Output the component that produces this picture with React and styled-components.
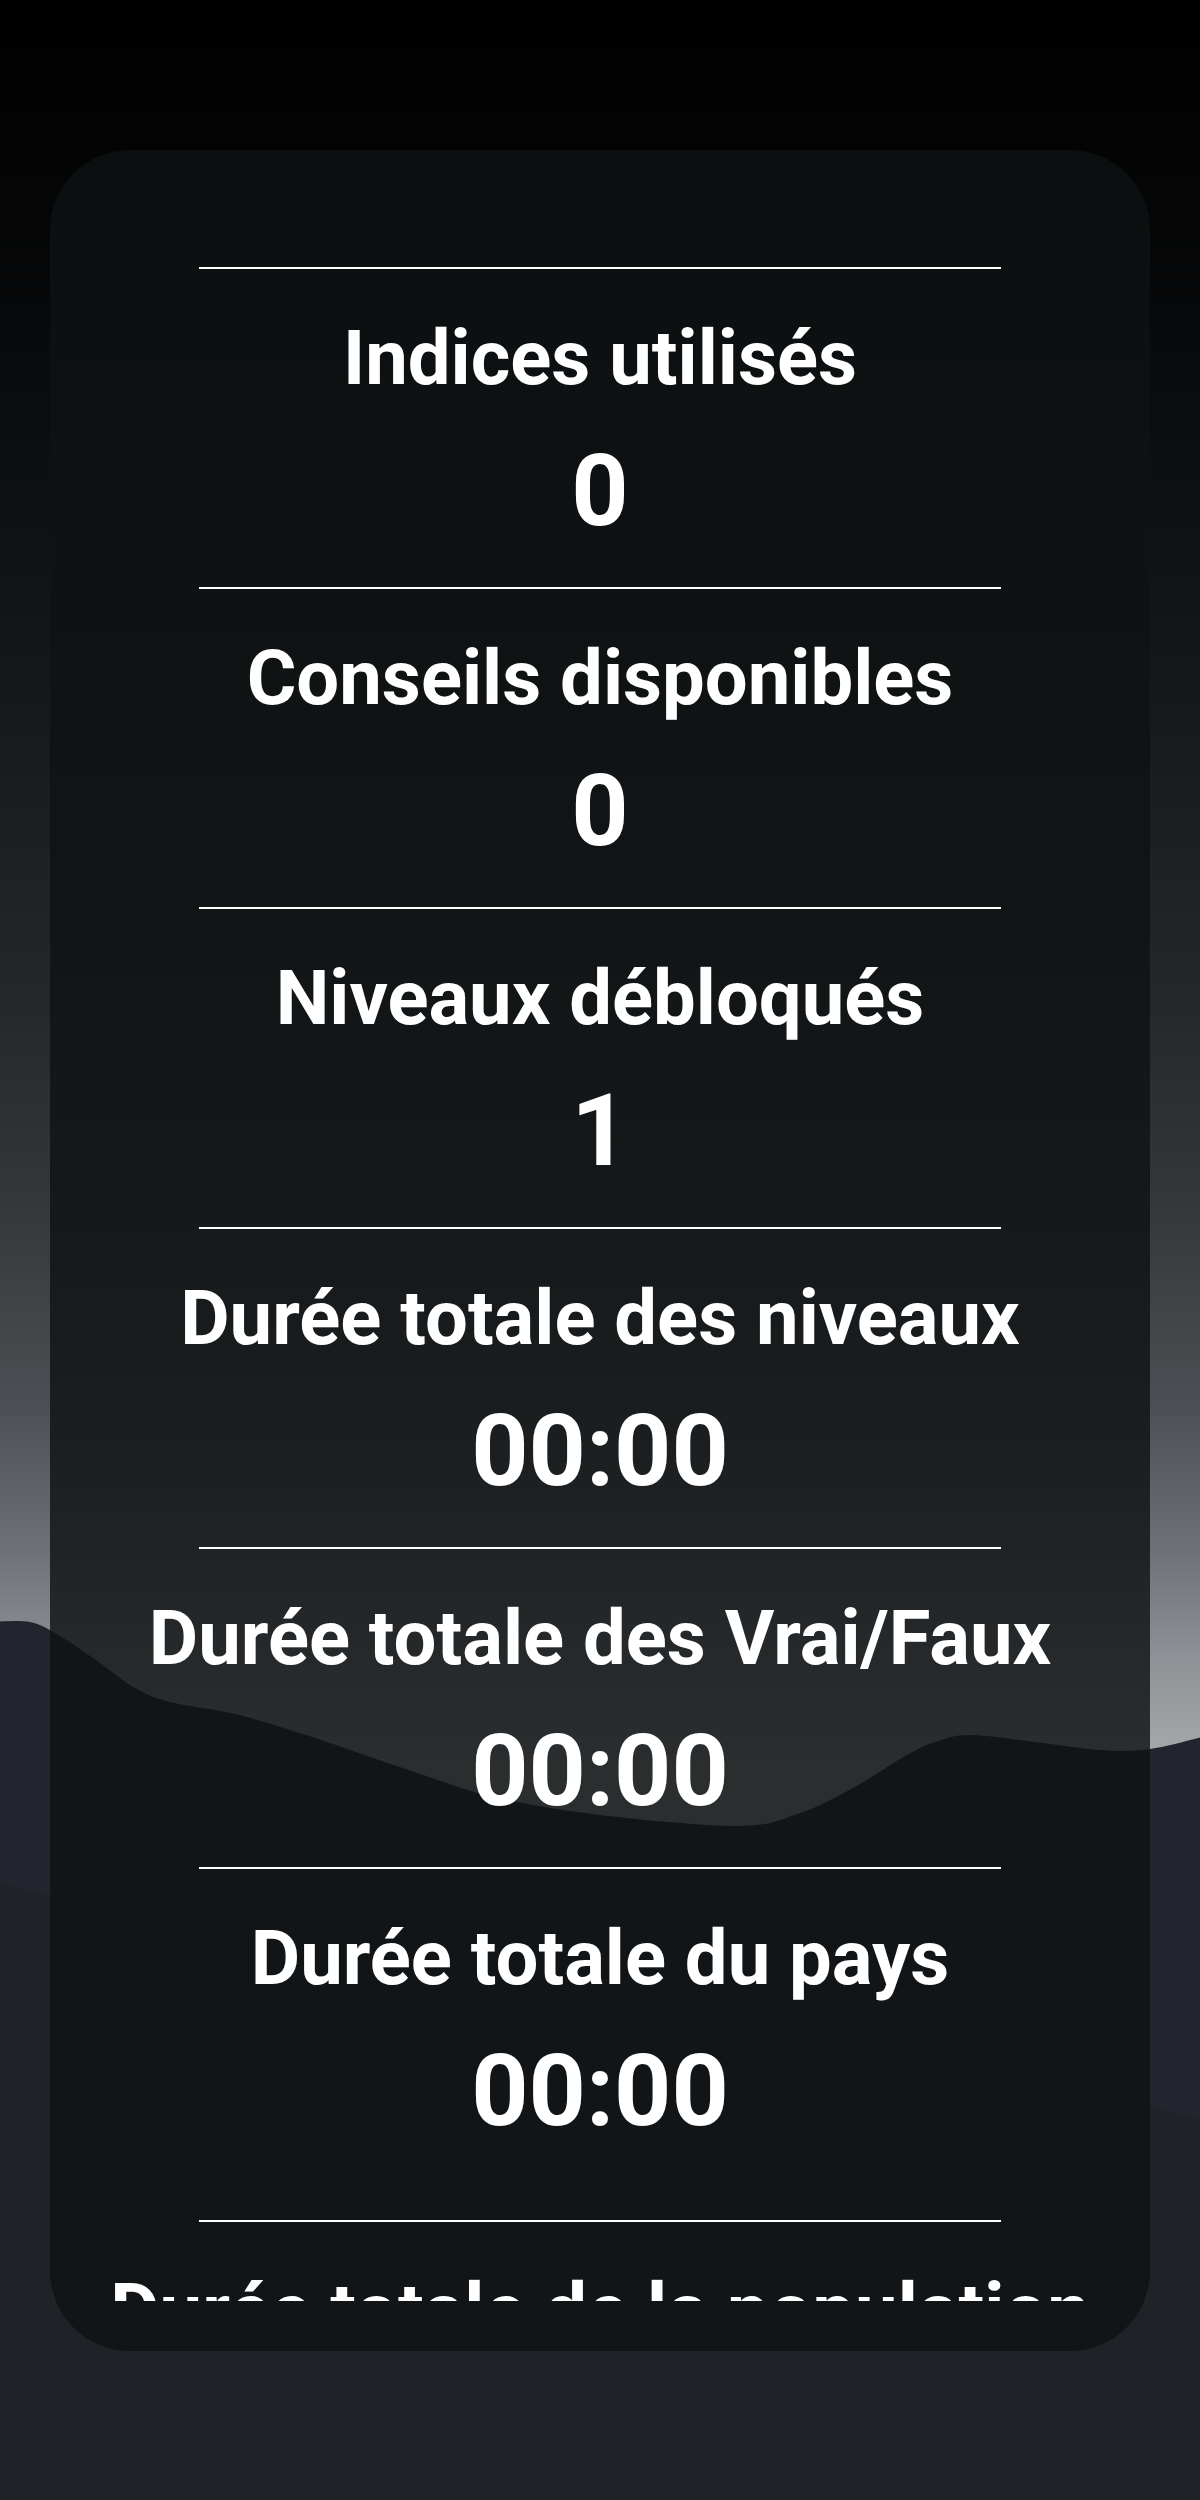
import React from "react";
import styled, { createGlobalStyle } from "styled-components";

const GlobalStyle = createGlobalStyle`
  html, body {
    margin: 0;
    padding: 0;
    background: #1f2227;
  }
  body {
    font-family: Roboto, "Noto Sans", "Liberation Sans", sans-serif;
    color: #ffffff;
  }
  * { box-sizing: border-box; }
`;

const Page = styled.div`
  position: relative;
  width: 1200px;
  min-height: 2500px;
  padding: 150px 50px 0;
  overflow: hidden;
`;

const Backdrop = styled.svg`
  position: absolute;
  top: 0;
  left: 0;
  width: 1200px;
  height: 2500px;
  z-index: 0;
  display: block;
`;

const Card = styled.section`
  position: relative;
  z-index: 1;
  height: 2201px;
  border-radius: 80px;
  background: rgba(15, 18, 19, 0.82);
  padding: 50px 0;
  display: flex;
  flex-direction: column;
`;

const Scroller = styled.div`
  flex: 1;
  overflow: hidden;
  display: flex;
  flex-direction: column;
  align-items: center;
  padding-top: 67px;
`;

const Stat = styled.div`
  display: flex;
  flex-direction: column;
  align-items: center;
  width: 100%;
  padding-bottom: ${(p) => (p.$extra ? 69 : 36)}px;
`;

const Divider = styled.div`
  width: 802px;
  height: 2px;
  background: #ffffff;
  flex-shrink: 0;
`;

const Title = styled.h2`
  margin: 44px 0 0;
  font-size: 76px;
  line-height: 90px;
  font-weight: 700;
  white-space: nowrap;
  text-align: center;
  color: #ffffff;
`;

const Value = styled.div`
  margin-top: 28px;
  font-size: 100px;
  line-height: 120px;
  font-weight: 700;
  text-align: center;
  color: #ffffff;
`;

function smoothPath(points) {
  let d = `M${points[0][0]},${points[0][1]}`;
  for (let i = 0; i < points.length - 1; i++) {
    const p0 = points[i - 1] || points[i];
    const p1 = points[i];
    const p2 = points[i + 1];
    const p3 = points[i + 2] || p2;
    const c1x = p1[0] + (p2[0] - p0[0]) / 6;
    const c1y = p1[1] + (p2[1] - p0[1]) / 6;
    const c2x = p2[0] - (p3[0] - p1[0]) / 6;
    const c2y = p2[1] - (p3[1] - p1[1]) / 6;
    d += ` C${c1x.toFixed(1)},${c1y.toFixed(1)} ${c2x.toFixed(1)},${c2y.toFixed(1)} ${p2[0]},${p2[1]}`;
  }
  return d;
}

const ridge = [
  [-10, 1622], [30, 1622], [60, 1636], [100, 1663], [135, 1688], [170, 1702],
  [235, 1714], [300, 1733], [400, 1767], [490, 1796], [600, 1815], [740, 1826],
  [800, 1813], [840, 1795], [870, 1778], [905, 1756], [935, 1742], [970, 1735],
  [1035, 1742], [1100, 1750], [1150, 1749], [1210, 1735],
];

const lower = [
  [-10, 1880], [50, 1896], [200, 1920], [400, 1955], [600, 1992], [800, 2030],
  [1000, 2072], [1210, 2122],
];

function Landscape() {
  const ridgeD = smoothPath(ridge) + " L1210,2510 L-10,2510 Z";
  const lowerD = smoothPath(lower) + " L1210,2510 L-10,2510 Z";
  return (
    <Backdrop viewBox="0 0 1200 2500" preserveAspectRatio="none" aria-hidden="true">
      <defs>
        <linearGradient id="sky" x1="0" y1="0" x2="0" y2="1760" gradientUnits="userSpaceOnUse">
          <stop offset="0" stopColor="#000000" />
          <stop offset="0.17" stopColor="#070809" />
          <stop offset="0.4" stopColor="#16181b" />
          <stop offset="0.57" stopColor="#25282b" />
          <stop offset="0.68" stopColor="#33373a" />
          <stop offset="0.8" stopColor="#4c5054" />
          <stop offset="0.88" stopColor="#6d7074" />
          <stop offset="0.94" stopColor="#8d9094" />
          <stop offset="1" stopColor="#a7a9ac" />
        </linearGradient>
      </defs>
      <rect x="0" y="0" width="1200" height="2500" fill="url(#sky)" />
      <path d={ridgeD} fill="#22252d" />
      <path d={lowerD} fill="#1f2227" />
    </Backdrop>
  );
}

const stats = [
  { title: "Indices utilisés", value: "0" },
  { title: "Conseils disponibles", value: "0" },
  { title: "Niveaux débloqués", value: "1" },
  { title: "Durée totale des niveaux", value: "00:00" },
  { title: "Durée totale des Vrai/Faux", value: "00:00" },
  { title: "Durée totale du pays", value: "00:00", extra: true },
  { title: "Durée totale de la population", value: "00:00" },
];

export default function App() {
  return (
    <>
      <GlobalStyle />
      <Page>
        <Landscape />
        <Card>
          <Scroller>
            {stats.map((s) => (
              <Stat key={s.title} $extra={s.extra}>
                <Divider />
                <Title>{s.title}</Title>
                <Value>{s.value}</Value>
              </Stat>
            ))}
          </Scroller>
        </Card>
      </Page>
    </>
  );
}
